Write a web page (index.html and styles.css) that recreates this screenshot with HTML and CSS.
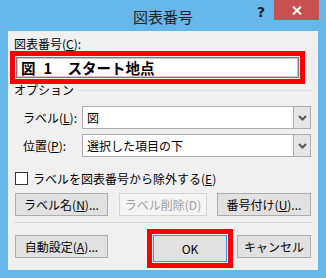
FILE: index.html
```html
<!DOCTYPE html>
<html lang="ja">
<head>
    <meta charset="UTF-8">
    <title>図表番号</title>
    <link rel="stylesheet" href="styles.css">
</head>
<body>
<div class="window">
    <div class="titlebar">
        <span></span>
        <span class="title">図表番号</span>
        <div class="title-buttons">
            <span class="help">?</span>
            <span class="close">
                <svg width="10" height="9" viewBox="0 0 10 9"><path d="M1 0.5 L9 8.5 M9 0.5 L1 8.5" stroke="#fff" stroke-width="2"/></svg>
            </span>
        </div>
    </div>

    <div class="client">
        <div class="field-label">図表番号(<u>C</u>):</div>
        <div class="caption-input marked">
            <span class="cap-word">図</span><span class="cap-num">1</span><span>スタート地点</span>
        </div>

        <div class="group-head">
            <span>オプション</span>
            <span class="rule"></span>
        </div>

        <div class="option-row">
            <span class="option-label">ラベル(<u>L</u>):</span>
            <div class="combo">
                <span class="combo-value">図</span>
                <span class="combo-button"><svg width="9" height="6" viewBox="0 0 9 6"><polyline points="1,1 4.5,4.5 8,1" fill="none" stroke="#555" stroke-width="2"/></svg></span>
            </div>
        </div>
        <div class="option-row">
            <span class="option-label">位置(<u>P</u>):</span>
            <div class="combo">
                <span class="combo-value">選択した項目の下</span>
                <span class="combo-button"><svg width="9" height="6" viewBox="0 0 9 6"><polyline points="1,1 4.5,4.5 8,1" fill="none" stroke="#555" stroke-width="2"/></svg></span>
            </div>
        </div>

        <div class="check">
            <span class="box"></span>
            <span>ラベルを図表番号から除外する(<u>E</u>)</span>
        </div>

        <div class="button-row">
            <button class="btn w-label">ラベル名(<u>N</u>)...</button>
            <button class="btn w-delete" disabled>ラベル削除(D)</button>
            <button class="btn w-number">番号付け(<u>U</u>)...</button>
        </div>

        <div class="separator"></div>

        <div class="button-row bottom">
            <button class="btn w-auto">自動設定(<u>A</u>)...</button>
            <button class="btn btn-ok marked">OK</button>
            <button class="btn w-cancel">キャンセル</button>
        </div>
    </div>
</div>
</body>
</html>
```

FILE: styles.css
```css
/* dialog window */
* {
    box-sizing: border-box;
}
body {
    margin: 0;
    font-family: "Noto Sans CJK JP", "Noto Sans", sans-serif;
    font-size: 12px;
    color: #000;
}
.window {
    width: 326px;
    height: 278px;
    background: #67b8ea;
    display: flex;
    flex-direction: column;
}
.titlebar {
    height: 31px;
    display: grid;
    grid-template-columns: 1fr auto 1fr;
}
.title {
    font-size: 15px;
    line-height: 20px;
    padding-top: 7px;
    color: #222;
}
.title-buttons {
    display: flex;
    justify-content: flex-end;
    align-items: flex-start;
    padding-right: 7px;
}
.help {
    font-family: "DejaVu Sans", sans-serif;
    font-weight: bold;
    font-size: 14px;
    line-height: 14px;
    color: #222;
    margin: 5px 9px 0 0;
}
.close {
    width: 45px;
    height: 20px;
    background: #c75050;
    display: flex;
    align-items: center;
    justify-content: center;
}
.close svg {
    display: block;
}

.client {
    flex: 1;
    margin: 0 8px 8px;
    background: #f0f0f0;
    padding: 5px 7px 0 6px;
    display: flex;
    flex-direction: column;
}
.field-label {
    line-height: 15px;
}
u {
    text-decoration: underline;
    text-underline-offset: 1px;
}

/* red annotation frames */
.marked {
    outline: 5px solid #ff0000;
    outline-offset: 1px;
}

.caption-input {
    height: 21px;
    margin: 6px 12px 0 2px;
    border: 1px solid #7a7a7a;
    box-shadow: inset 0 0 0 1px #c8c8c8;
    background: #fff;
    display: flex;
    align-items: center;
    padding-left: 4px;
    font-weight: bold;
    font-size: 14.5px;
    line-height: 19px;
}
.cap-word {
    margin-right: 8px;
}
.cap-num {
    width: 8px;
    margin-right: 16px;
    text-align: center;
}

.group-head {
    display: flex;
    align-items: center;
    margin-top: 5px;
    line-height: 14px;
}
.rule {
    flex: 1;
    border-top: 1px solid #dcdcdc;
    margin: 1px -1px 0 4px;
}

.option-row {
    display: grid;
    grid-template-columns: 59px 1fr;
    align-items: center;
    padding-left: 9px;
    margin-top: 5px;
}
.group-head + .option-row {
    margin-top: 9px;
}
.combo {
    height: 23px;
    border: 1px solid #acacac;
    background: #fff;
    display: flex;
}
.combo-value {
    flex: 1;
    line-height: 21px;
    padding-left: 4px;
}
.combo-button {
    width: 17px;
    border-left: 1px solid #acacac;
    background: #e5e5e5;
    display: flex;
    align-items: center;
    justify-content: center;
}

.check {
    display: flex;
    align-items: center;
    margin-top: 14px;
    line-height: 15px;
}
.box {
    width: 13px;
    height: 13px;
    border: 1px solid #333;
    background: #fff;
    margin: 0 5px 0 1px;
}

.button-row {
    display: flex;
    margin-top: 7px;
    padding-left: 1px;
    gap: 10px;
}
.button-row.bottom {
    margin-top: 12px;
    align-items: flex-start;
}
.btn {
    font-family: inherit;
    font-size: 12px;
    height: 23px;
    padding: 0;
    border: 1px solid #adadad;
    background: #e1e1e1;
    color: #000;
}
.btn:disabled {
    background: #f4f4f4;
    border-color: #d3d3d3;
    color: #a0a0a0;
}
.w-label { width: 93px; }
.w-delete { width: 88px; margin-left: 1px; }
.w-number { width: 94px; }
.w-auto { width: 93px; }
.w-cancel { width: 74px; }
.btn-ok {
    width: 74px;
    height: 27px;
    margin-left: auto;
    border-color: #3399ff;
}

.separator {
    height: 1px;
    background: #d5d5d5;
    margin: 6px -1px 0 0;
}
```
